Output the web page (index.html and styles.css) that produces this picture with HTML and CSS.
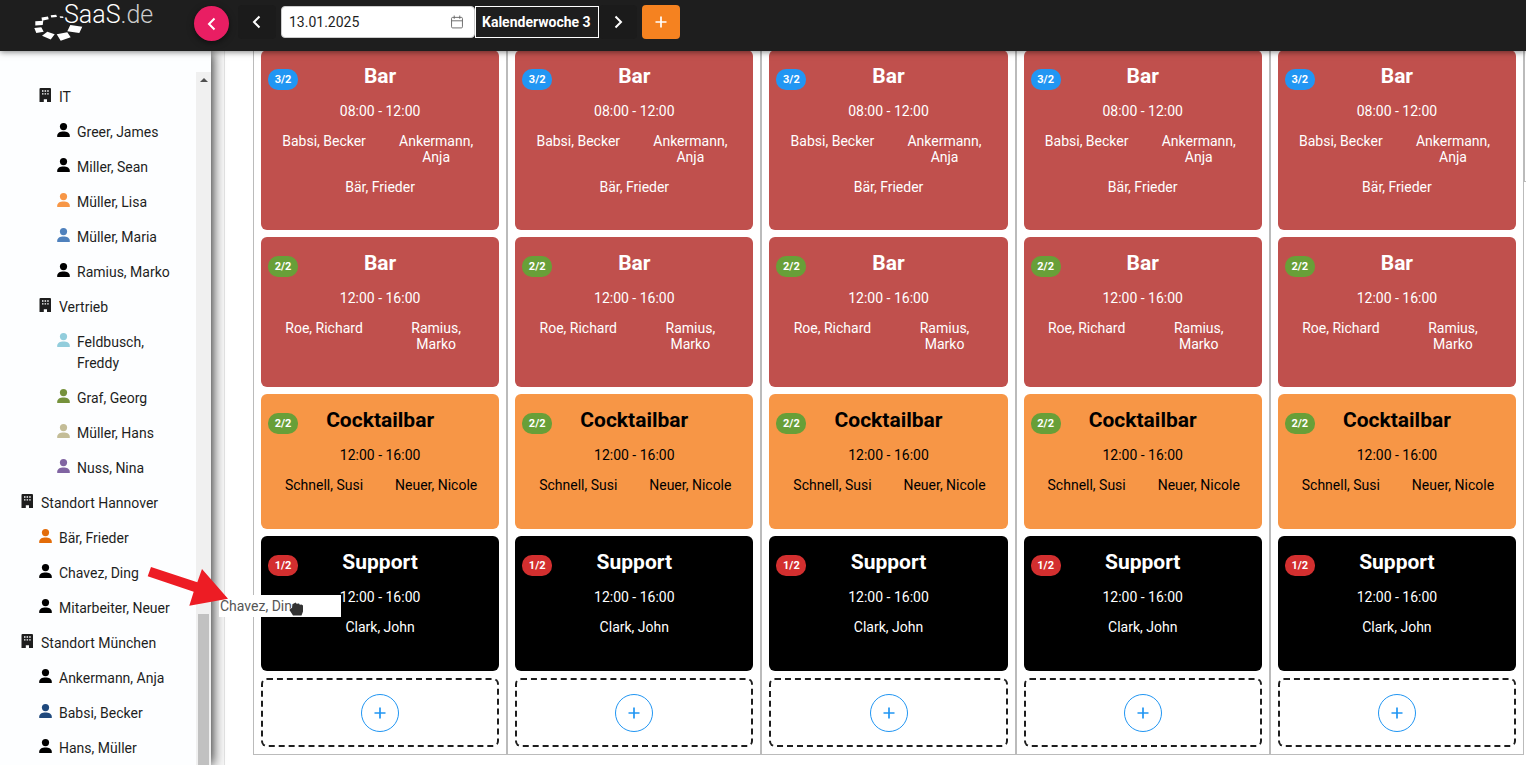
FILE: index.html
```html
<!DOCTYPE html>
<html lang="de">
<head>
<meta charset="utf-8">
<title>Kalenderwoche 3</title>
<link rel="stylesheet" href="styles.css">
</head>
<body>
<svg class="sprite" aria-hidden="true">
  <symbol id="person" viewBox="0 0 13 14"><circle cx="6.500" cy="3.600" r="3.600"/><path d="M.2 14v-1.200C.2 10 3 8.500 6.500 8.500s6.300 1.500 6.300 4.300V14z"/></symbol>
  <symbol id="building" viewBox="0 0 13 14"><path fill-rule="evenodd" d="M1.500 0h9.500a1 1 0 0 1 1 1v13H8v-2.700H4.800V14H.5V1a1 1 0 0 1 1-1zM3 2.300v1.400h1.500V2.300zM5.600 2.300v1.400h1.500V2.300zM8.200 2.300v1.400h1.500V2.300zM3 5.200v1.400h1.500V5.200zM5.600 5.200v1.400h1.500V5.200zM8.200 5.200v1.400h1.500V5.200z"/></symbol>
  <symbol id="left" viewBox="0 0 14 14"><path d="M9.500 1.500L4 7l5.500 5.500" fill="none" stroke="currentColor" stroke-width="2"/></symbol>
  <symbol id="right" viewBox="0 0 14 14"><path d="M4.500 1.500L10 7l-5.500 5.500" fill="none" stroke="currentColor" stroke-width="2"/></symbol>
  <symbol id="plus" viewBox="0 0 14 14"><path d="M7 1.500v11M1.500 7h11" fill="none" stroke="currentColor" stroke-width="1.700"/></symbol>
</svg>

<header class="topbar">
  <a class="logo" href="#" aria-label="SaaS.de">
    <svg class="logo-swirl" viewBox="0 0 50 28" aria-hidden="true">
      <path d="M25.700 3.200l3.400.3.400 1.500-3.500-.2zM16.700 2.200l5.500-.5.800 2.200-5.800.6zM7.500 4.500l6.500-.9.700 2.600L8 7.700zM1.300 8.300l8-.6-.6 4.300-7.400.6zM.3 15l7-.7 2.400 4.400L2.300 20zM8 22.700l5.300-4 7.400 2.600-4 5.200zM22.700 21.300l10.600-2 3.400 5L26.700 27.800zM36.300 12l12 1.700-3 6.300-12-1.700z"/>
    </svg>
    <span class="logo-text">SaaS<span class="logo-tld">.de</span></span>
  </a>
  <button class="collapse" type="button" aria-label="Seitenleiste einklappen"><svg class="glyph"><use href="#left"/></svg></button>
  <nav class="week-nav">
    <button class="step" type="button" aria-label="Vorherige Woche"><svg class="glyph"><use href="#left"/></svg></button>
    <label class="date">
      <input class="date-input" type="text" value="13.01.2025" aria-label="Datum">
      <svg class="date-icon" viewBox="0 0 13 14" fill="none" stroke="#666" aria-hidden="true"><rect x=".6" y="2" width="11.800" height="11.400" rx="1.200"/><path d="M.6 5.700h11.800M3.500 0v3.500M9.500 0v3.500"/></svg>
    </label>
    <button class="week" type="button">Kalenderwoche 3</button>
    <button class="step" type="button" aria-label="Nächste Woche"><svg class="glyph"><use href="#right"/></svg></button>
  </nav>
  <button class="create" type="button" aria-label="Neu"><svg class="glyph"><use href="#plus"/></svg></button>
</header>

<div class="layout">
  <aside class="sidebar">
    <ul class="tree" id="tree"></ul>
    <div class="scrollbar" aria-hidden="true">
      <svg class="scroll-arrow" viewBox="0 0 8 4"><path d="M0 4l4-4 4 4z"/></svg>
      <div class="scroll-thumb"></div>
    </div>
  </aside>
  <main class="board">
    <div class="days" id="days"></div>
  </main>
</div>

<svg class="drag-arrow" viewBox="0 0 82 40" aria-hidden="true"><path d="M4 1l46.300 15.300L55 3l26 29.700-38.700 7 4.400-14L.7 10.300z"/></svg>
<div class="drag-chip">Chavez, Ding
  <svg class="drag-hand" viewBox="0 0 16 17" aria-hidden="true"><path d="M2.500 8.500L1.500 10l3.500 5.500h8.500l1.500-4V5.500l-1.500-1-1.500.3-1.500-1.300-1.500.5L7.500 2.500 6 3.500 4.500 4 4 8z"/></svg>
</div>
<script src="app.js"></script>
</body>
</html>
```

FILE: styles.css
```css
* {
  box-sizing: border-box;
}

body {
  margin: 0;
  height: 100vh;
  display: flex;
  flex-direction: column;
  overflow: hidden;
  background: #fff;
  color: #1e1e1e;
  font: 14px/21px Roboto, "Liberation Sans", sans-serif;
}

button,
input {
  font: inherit;
}

button {
  display: flex;
  align-items: center;
  justify-content: center;
  padding: 0;
  border: 0;
  color: #fff;
  cursor: pointer;
}

.sprite {
  display: none;
}

.glyph {
  width: 14px;
  height: 14px;
}

/* Top bar */

.topbar {
  position: relative;
  z-index: 3;
  flex: none;
  display: flex;
  align-items: flex-start;
  padding: 5px 0 10px 34px;
  background: #1e1e1e;
  box-shadow: 0 1px 6px rgba(0, 0, 0, 0.5);
}

.logo {
  width: 160px;
  height: 36px;
  display: grid;
  color: #fff;
  text-decoration: none;
}

.logo-swirl {
  grid-area: 1 / 1;
  align-self: end;
  width: 50px;
  height: 28px;
  fill: #fff;
}

.logo-text {
  grid-area: 1 / 1;
  padding-left: 30px;
  font-size: 25px;
  line-height: 20px;
  font-weight: 300;
}

.logo-tld {
  color: #ccc;
}

.collapse {
  width: 35px;
  height: 35px;
  margin-top: 1px;
  border-radius: 50%;
  background: #e91e63;
  box-shadow: 0 2px 6px rgba(0, 0, 0, 0.5);
}

.week-nav {
  display: flex;
  align-items: center;
  padding-left: 9px;
}

.step {
  width: 38px;
  height: 34px;
  border-radius: 4px;
  background: #1b1b1b;
}

.date {
  display: flex;
  align-items: center;
  width: 194px;
  height: 32px;
  margin-left: 5px;
  padding: 0 11px 0 7px;
  border: 1px solid #ccc;
  border-radius: 4px;
  background: #fff;
}

.date-input {
  flex: 1;
  min-width: 0;
  padding: 0;
  border: 0;
  outline: 0;
  background: none;
  color: #1e1e1e;
}

.date-icon {
  width: 12px;
  height: 14px;
}

.week {
  height: 32px;
  padding: 0 7px 0 6px;
  border: 1px solid #fff;
  background: #1e1e1e;
  font-weight: 700;
}

.create {
  width: 38px;
  height: 34px;
  margin-left: 5px;
  border-radius: 4px;
  background: #f58220;
}

/* Layout */

.layout {
  flex: 1;
  min-height: 0;
  display: flex;
  background: linear-gradient(to right, #f8f8f8 225px, #fff 225px);
}

.sidebar {
  position: relative;
  z-index: 2;
  flex: none;
  width: 211px;
  display: flex;
  background: #fdfeff;
  box-shadow: 1px 0 12px rgba(0, 0, 0, 0.9);
}

.tree {
  flex: 1;
  min-width: 0;
  margin: 0;
  padding: 29px 14px 0 21px;
  overflow: hidden;
  list-style: none;
}

.node {
  display: flex;
  gap: 7px;
  padding: 7px 0;
}

.level-2 {
  padding-left: 18px;
}

.level-3 {
  padding-left: 36px;
}

.node-icon {
  flex: none;
  width: 13px;
  height: 14px;
  margin-top: 1px;
}

.scrollbar {
  width: 15px;
  margin-top: 21px;
  display: flex;
  flex-direction: column;
  align-items: center;
  justify-content: space-between;
  padding-top: 6px;
  background: #f0f0f0;
}

.scroll-arrow {
  width: 8px;
  height: 4px;
  fill: #505050;
}

.scroll-thumb {
  width: 11px;
  height: 22%;
  background: #c1c1c1;
}

/* Week board */

.board {
  flex: 1;
  min-width: 0;
  margin-top: -1px;
  margin-left: 13px;
  padding-left: 28px;
  border-left: 1px solid #e4e4e4;
}

.days {
  display: flex;
  align-items: flex-start;
}

.day {
  flex: 1;
  min-width: 0;
  display: flex;
  flex-direction: column;
  gap: 7px;
  padding: 0 7px 7px;
  border: 1px solid #bbb;
  border-top: 0;
}

.day-next {
  flex: none;
  width: 2px;
  height: 132px;
  border: 1px solid #bbb;
  border-width: 0 0 1px 1px;
}

.shift {
  position: relative;
  min-height: 135px;
  padding: 14px 7px 35px;
  border-radius: 6px;
  color: #fff;
  text-align: center;
}

.shift-bar {
  background: #c0504d;
}

.shift-cocktail {
  background: #f79646;
  color: #000;
}

.shift-support {
  background: #000;
}

.badge {
  position: absolute;
  top: 19px;
  left: 7px;
  width: 30px;
  border-radius: 10px;
  color: #fff;
  font-size: 11px;
  font-weight: 700;
}

.badge-over {
  background: #2196f3;
}

.badge-full {
  background: #689f38;
}

.badge-under {
  background: #d32f2f;
}

.shift-title {
  margin: 0;
  font-size: 21px;
  line-height: 24px;
  font-weight: 700;
}

.shift-time {
  margin: 13px 0 11px;
  line-height: 21px;
}

.crew {
  display: flex;
  flex-wrap: wrap;
  justify-content: center;
  gap: 14px 0;
  margin: 0;
  padding: 0;
  list-style: none;
  line-height: 16px;
}

.crew-member {
  width: 50%;
  padding: 0 10px;
}

.slot {
  height: 69px;
  display: flex;
  align-items: center;
  justify-content: center;
  border: 2px dashed #1e1e1e;
  border-radius: 6px;
}

.slot-add {
  width: 38px;
  height: 38px;
  border: 1px solid #2196f3;
  border-radius: 50%;
  background: #fff;
  color: #2196f3;
}

/* Drag feedback */

.drag-arrow {
  position: absolute;
  z-index: 5;
  left: 147px;
  top: 566px;
  width: 82px;
  height: 40px;
  fill: #ed1c24;
}

.drag-chip {
  position: absolute;
  z-index: 4;
  left: 219px;
  top: 595px;
  width: 122px;
  height: 22px;
  padding-left: 1px;
  background: #fff;
  color: #555;
  line-height: 22px;
}

.drag-hand {
  position: absolute;
  left: 69px;
  top: 5px;
  width: 16px;
  height: 17px;
  fill: #333;
  stroke: #fff;
  paint-order: stroke;
}
```

FILE: app.js
```javascript
const nodes = [
  [2, "IT"],
  [3, "Greer, James", "#000"],
  [3, "Miller, Sean", "#000"],
  [3, "Müller, Lisa", "#f79646"],
  [3, "Müller, Maria", "#4f81bd"],
  [3, "Ramius, Marko", "#000"],
  [2, "Vertrieb"],
  [3, "Feldbusch, Freddy", "#92cddc"],
  [3, "Graf, Georg", "#76923c"],
  [3, "Müller, Hans", "#c4bd97"],
  [3, "Nuss, Nina", "#8064a2"],
  [1, "Standort Hannover"],
  [2, "Bär, Frieder", "#e36c09"],
  [2, "Chavez, Ding", "#000"],
  [2, "Mitarbeiter, Neuer", "#000"],
  [1, "Standort München"],
  [2, "Ankermann, Anja", "#000"],
  [2, "Babsi, Becker", "#1f497d"],
  [2, "Hans, Müller", "#000"]
];

const shifts = [
  { kind: "bar", title: "Bar", time: "08:00 - 12:00", state: "over", count: "3/2", crew: ["Babsi, Becker", "Ankermann, Anja", "Bär, Frieder"] },
  { kind: "bar", title: "Bar", time: "12:00 - 16:00", state: "full", count: "2/2", crew: ["Roe, Richard", "Ramius, Marko"] },
  { kind: "cocktail", title: "Cocktailbar", time: "12:00 - 16:00", state: "full", count: "2/2", crew: ["Schnell, Susi", "Neuer, Nicole"] },
  { kind: "support", title: "Support", time: "12:00 - 16:00", state: "under", count: "1/2", crew: ["Clark, John"] }
];

document.getElementById("tree").innerHTML = nodes.map(([level, name, color]) => `
  <li class="node level-${level}">
    <svg class="node-icon" fill="${color || "#1e1e1e"}"><use href="#${color ? "person" : "building"}"/></svg>
    <span>${name}</span>
  </li>`).join("");

const shiftCard = (s) => `
  <article class="shift shift-${s.kind}">
    <span class="badge badge-${s.state}">${s.count}</span>
    <h2 class="shift-title">${s.title}</h2>
    <div class="shift-time">${s.time}</div>
    <ul class="crew">${s.crew.map((name) => `<li class="crew-member">${name}</li>`).join("")}</ul>
  </article>`;

const day = `
  <section class="day">
    ${shifts.map(shiftCard).join("")}
    <div class="slot"><button class="slot-add" type="button" aria-label="Schicht hinzufügen"><svg class="glyph"><use href="#plus"/></svg></button></div>
  </section>`;

document.getElementById("days").innerHTML = day.repeat(5) + '<section class="day-next"></section>';
```
